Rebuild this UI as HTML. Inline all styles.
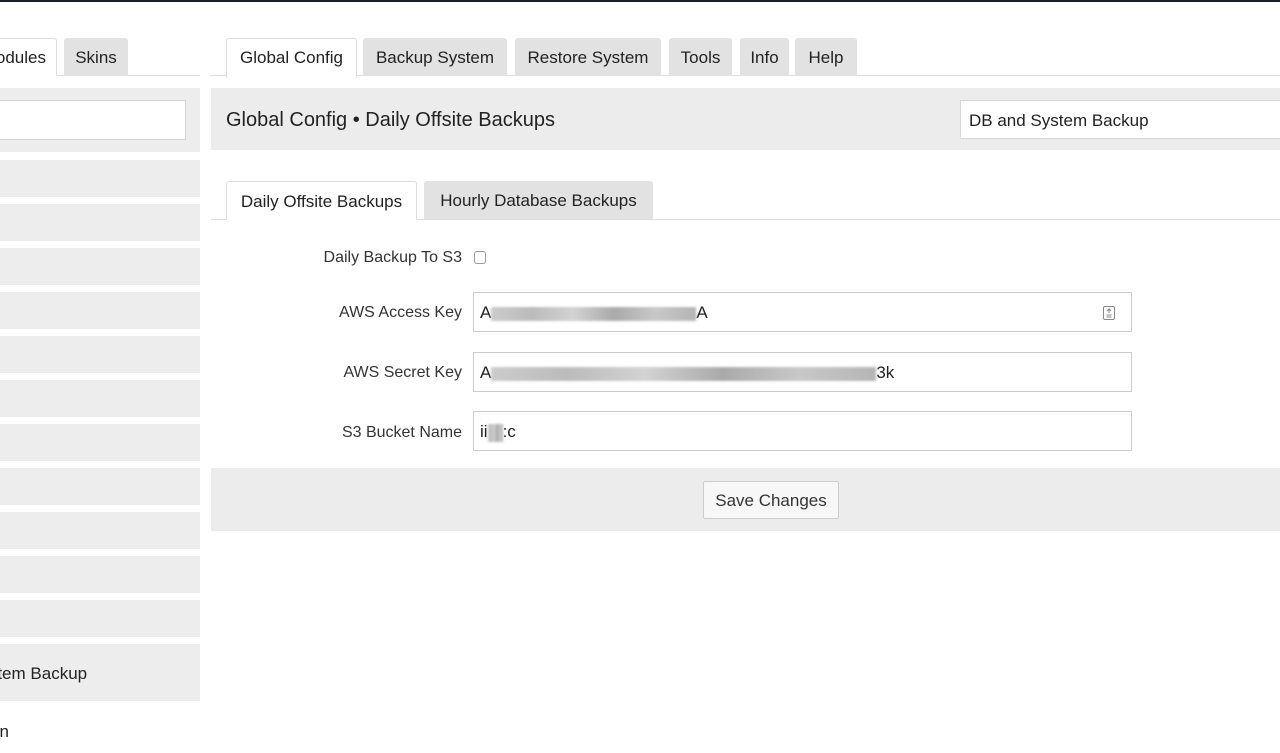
<!DOCTYPE html>
<html><head><style>
body{margin:0;width:1280px;height:753px;position:relative;overflow:hidden;background:#fff;font-family:"Liberation Sans",sans-serif;color:#222;font-size:16px}
.a{position:absolute;box-sizing:border-box}
.tab{position:absolute;top:38px;height:38px;background:#e2e2e2;border-radius:3px 3px 0 0;line-height:40px;text-align:center;font-size:17px;color:#222}
.tab.on{background:#fff;border:1px solid #ddd;border-bottom:1px solid #fff;line-height:38px}
.row{position:absolute;left:0;width:200px;background:#ededed}
.lbl{position:absolute;right:818px;font-size:16px;color:#333;text-align:right;white-space:nowrap}
.inp{position:absolute;left:473px;width:659px;height:40px;border:1px solid #ccc;background:#fff;box-sizing:border-box;padding-left:6px;line-height:38px;font-size:17px}
.blur{display:inline-block;height:14px;vertical-align:middle;background:linear-gradient(90deg,#ccc,#bbb 20%,#d3d3d3 40%,#aaa 60%,#c8c8c8 80%,#b5b5b5);filter:blur(1px)}
</style></head><body>
<div class="a" style="left:0;top:0;width:1280px;height:2px;background:#1b1e2b"></div>
<div class="a" style="left:0;top:75px;width:200px;height:1px;background:#ddd"></div>
<div class="tab on" style="left:-40px;width:97px;text-align:right;padding-right:10px;box-sizing:border-box">Modules</div>
<div class="tab" style="left:64px;width:64px">Skins</div>
<div class="a" style="left:210px;top:75px;width:1070px;height:1px;background:#ddd"></div>
<div class="tab on" style="left:226px;width:129px">Global Config</div>
<div class="tab" style="left:363px;width:144px">Backup System</div>
<div class="tab" style="left:515px;width:146px">Restore System</div>
<div class="tab" style="left:669px;width:63px">Tools</div>
<div class="tab" style="left:740px;width:49px">Info</div>
<div class="tab" style="left:795px;width:62px">Help</div>
<div class="row" style="top:88px;height:64px"></div>
<div class="a" style="left:-2px;top:100px;width:188px;height:40px;background:#fff;border:1px solid #d5d5d5"></div>
<div class="row" style="top:160px;height:37px"></div>
<div class="row" style="top:204px;height:37px"></div>
<div class="row" style="top:248px;height:37px"></div>
<div class="row" style="top:292px;height:37px"></div>
<div class="row" style="top:336px;height:37px"></div>
<div class="row" style="top:380px;height:37px"></div>
<div class="row" style="top:424px;height:37px"></div>
<div class="row" style="top:468px;height:37px"></div>
<div class="row" style="top:512px;height:37px"></div>
<div class="row" style="top:556px;height:37px"></div>
<div class="row" style="top:600px;height:37px"></div>
<div class="row" style="top:644px;height:57px"></div>
<div class="a" style="left:-31px;top:664px;font-size:17px;white-space:nowrap">System Backup</div>
<div class="a" style="left:-10px;top:722px;font-size:17px">on</div>
<div class="a" style="left:211px;top:88px;width:1069px;height:62px;background:#ececec"></div>
<div class="a" style="left:226px;top:109px;font-size:20px;color:#222;white-space:nowrap">Global Config • Daily Offsite Backups</div>
<div class="a" style="left:960px;top:100px;width:330px;height:39px;background:#fff;border:1px solid #d8d8d8;padding-left:8px;line-height:40px;font-size:17px">DB and System Backup</div>
<div class="a" style="left:211px;top:219px;width:1069px;height:1px;background:#ddd"></div>
<div class="a" style="left:226px;top:181px;width:191px;height:39px;background:#fff;border:1px solid #ddd;border-bottom:1px solid #fff;border-radius:3px 3px 0 0;text-align:center;line-height:39px;font-size:17px">Daily Offsite Backups</div>
<div class="a" style="left:424px;top:181px;width:229px;height:38px;background:#e2e2e2;border-radius:3px 3px 0 0;text-align:center;line-height:40px;font-size:17px">Hourly Database Backups</div>
<div class="lbl" style="top:249px">Daily Backup To S3</div>
<div class="a" style="left:474px;top:251px;width:12px;height:13px;border:1px solid #999;border-radius:3px;background:#fff"></div>
<div class="lbl" style="top:304px">AWS Access Key</div>
<div class="inp" style="top:292px;line-height:40px">A<span class="blur" style="width:205px"></span>A
<svg class="a" style="left:628px;top:12px" width="14" height="16" viewBox="0 0 14 16"><rect x="1.5" y="1.5" width="11" height="13" rx="1.5" fill="none" stroke="#888"/><path d="M7 4v4M5 6l2-2 2 2M4.5 10h5M4.5 12h5" stroke="#888" fill="none"/></svg></div>
<div class="lbl" style="top:364px">AWS Secret Key</div>
<div class="inp" style="top:352px;line-height:40px">A<span class="blur" style="width:385px"></span>3k</div>
<div class="lbl" style="top:424px">S3 Bucket Name</div>
<div class="inp" style="top:411px;line-height:40px">ii<span class="blur" style="width:15px;height:18px"></span>:c</div>
<div class="a" style="left:211px;top:468px;width:1069px;height:63px;background:#ececec"></div>
<div class="a" style="left:703px;top:481px;width:136px;height:38px;background:#f7f7f7;border:1px solid #ccc;border-radius:2px;text-align:center;line-height:38px;font-size:17px;color:#333">Save Changes</div>
</body></html>
